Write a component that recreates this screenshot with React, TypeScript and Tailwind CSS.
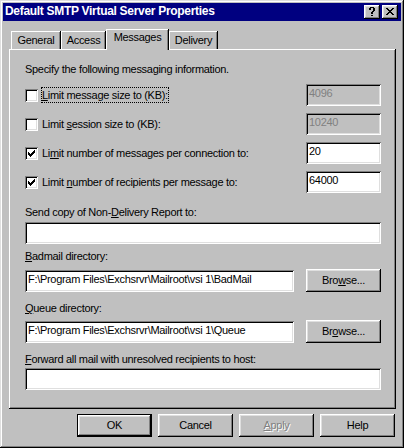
import type { ReactNode } from "react";

const raised =
  "shadow-[inset_-1px_-1px_0_#000,inset_1px_1px_0_#fff,inset_-2px_-2px_0_#808080,inset_2px_2px_0_#dfdfdf]";
const sunken =
  "shadow-[inset_1px_1px_0_#808080,inset_-1px_-1px_0_#fff,inset_2px_2px_0_#000,inset_-2px_-2px_0_#dfdfdf]";

const CHECK = [
  "......X",
  ".....XX",
  "X...XXX",
  "XX.XXX.",
  "XXXXX..",
  ".XXX...",
  "..X....",
];

const CLOSE = [
  "XX....XX",
  ".XX..XX.",
  "..XXXX..",
  "...XX...",
  "..XXXX..",
  ".XX..XX.",
  "XX....XX",
];

const HELP = [
  ".XXXX.",
  "XX..XX",
  "XX..XX",
  "....XX",
  "...XX.",
  "..XX..",
  "..XX..",
  "......",
  "..XX..",
];

function Glyph({ rows }: { rows: string[] }) {
  let d = "";
  rows.forEach((row, y) => {
    let x = 0;
    while (x < row.length) {
      if (row[x] === "X") {
        let end = x;
        while (end < row.length && row[end] === "X") end++;
        d += `M${x} ${y}h${end - x}v1h-${end - x}z`;
        x = end;
      } else x++;
    }
  });
  const w = rows[0].length;
  const h = rows.length;
  return (
    <svg width={w} height={h} viewBox={`0 0 ${w} ${h}`} shapeRendering="crispEdges">
      <path d={d} fill="currentColor" />
    </svg>
  );
}

function Checkbox({ checked }: { checked?: boolean }) {
  return (
    <span className={`flex h-[13px] w-[13px] shrink-0 bg-white pl-[3px] pt-[3px] text-black ${sunken}`}>
      {checked && <Glyph rows={CHECK} />}
    </span>
  );
}

function Edit({
  value = "",
  disabled = false,
  className = "",
}: {
  value?: string;
  disabled?: boolean;
  className?: string;
}) {
  return (
    <div
      className={`h-[22px] whitespace-nowrap px-[3px] pt-[3px] leading-[13px] ${
        disabled ? "bg-[#c0c0c0] text-[#808080]" : "bg-white text-black"
      } ${sunken} ${className}`}
    >
      {value}
    </div>
  );
}

function Button({
  children,
  isDefault = false,
  disabled = false,
}: {
  children: ReactNode;
  isDefault?: boolean;
  disabled?: boolean;
}) {
  const text = disabled ? "text-[#808080] [text-shadow:1px_1px_0_#fff]" : "text-black";
  if (isDefault) {
    return (
      <div className="h-[23px] w-[75px] shrink-0 border border-black">
        <div className={`flex h-full items-center justify-center ${raised} ${text}`}>{children}</div>
      </div>
    );
  }
  return (
    <div className={`flex h-[23px] w-[75px] shrink-0 items-center justify-center ${raised} ${text}`}>
      {children}
    </div>
  );
}

function CaptionButton({ rows }: { rows: string[] }) {
  return (
    <div
      className={`flex h-[14px] w-[16px] items-center justify-center bg-[#c0c0c0] pb-px pr-px text-black ${raised}`}
    >
      <Glyph rows={rows} />
    </div>
  );
}

function Tab({ label, width, selected = false }: { label: string; width: string; selected?: boolean }) {
  return (
    <div
      className={`${width} ${
        selected ? "relative z-10 -mb-px h-[21px] pt-[2px]" : "h-[18px] pt-[3px]"
      } shrink-0 bg-[#c0c0c0] text-center leading-[13px] shadow-[inset_-1px_0_0_#000,inset_1px_1px_0_#fff,inset_-2px_0_0_#808080]`}
    >
      {label}
    </div>
  );
}

function CheckRow({
  label,
  value,
  checked,
  focused,
}: {
  label: ReactNode;
  value: string;
  checked?: boolean;
  focused?: boolean;
}) {
  return (
    <div className="flex h-[22px] items-center">
      <Checkbox checked={checked} />
      <span
        className={`ml-[3px] border leading-[14px] ${focused ? "border-dotted border-black" : "border-transparent"}`}
      >
        {label}
      </span>
      <Edit value={value} disabled={!checked} className="ml-auto w-[75px]" />
    </div>
  );
}

export default function App() {
  return (
    <div
      className={`flex h-[448px] w-[404px] flex-col bg-[#c0c0c0] p-[3px] font-['Liberation_Sans',Arial,sans-serif] text-[11px] tracking-[-0.3px] text-black shadow-[inset_-1px_-1px_0_#000,inset_1px_1px_0_#dfdfdf,inset_-2px_-2px_0_#808080,inset_2px_2px_0_#fff]`}
    >
      {/* caption */}
      <div className="flex h-[18px] shrink-0 items-start bg-[#000080] pl-[2px] pr-[3px]">
        <span className="text-[12px] font-bold leading-[16px] tracking-[-0.3px] text-white">
          Default SMTP Virtual Server Properties
        </span>
        <div className="ml-auto mt-[2px] flex gap-[2px]">
          <CaptionButton rows={HELP} />
          <CaptionButton rows={CLOSE} />
        </div>
      </div>

      {/* tabs */}
      <div className="ml-[6px] mr-[5px] mt-[8px] flex h-[20px] shrink-0 items-end pl-[2px]">
        <Tab label="General" width="w-[50px]" />
        <Tab label="Access" width="w-[45px]" />
        <Tab label="Messages" width="w-[63px]" selected />
        <Tab label="Delivery" width="w-[49px]" />
      </div>

      {/* page */}
      <div className="ml-[6px] mr-[5px] flex h-[360px] shrink-0 flex-col pl-[16px] pr-[15px] pt-[14px] shadow-[inset_-1px_-1px_0_#000,inset_1px_1px_0_#fff,inset_-2px_-2px_0_#808080]">
        <div className="leading-[13px]">Specify the following messaging information.</div>

        <div className="mt-[8px] flex flex-col gap-[7px]">
          <CheckRow
            focused
            value="4096"
            label={
              <>
                <u>L</u>imit message size to (KB):
              </>
            }
          />
          <CheckRow
            value="10240"
            label={
              <>
                Limit <u>s</u>ession size to (KB):
              </>
            }
          />
          <CheckRow
            checked
            value="20"
            label={
              <>
                Li<u>m</u>it number of messages per connection to:
              </>
            }
          />
          <CheckRow
            checked
            value="64000"
            label={
              <>
                Limit <u>n</u>umber of recipients per message to:
              </>
            }
          />
        </div>

        <div className="mt-[13px] leading-[13px]">
          Send copy of Non-<u>D</u>elivery Report to:
        </div>
        <Edit className="mt-[3px]" />

        <div className="mt-[6px] leading-[13px]">
          <u>B</u>admail directory:
        </div>
        <div className="mt-[6px] flex items-center justify-between">
          <Edit className="w-[269px]" value="F:\Program Files\Exchsrvr\Mailroot\vsi 1\BadMail" />
          <Button>
            Bro<u>w</u>se...
          </Button>
        </div>

        <div className="mt-[10px] leading-[13px]">
          <u>Q</u>ueue directory:
        </div>
        <div className="mt-[5px] flex items-center justify-between">
          <Edit className="w-[269px]" value="F:\Program Files\Exchsrvr\Mailroot\vsi 1\Queue" />
          <Button>
            Br<u>o</u>wse...
          </Button>
        </div>

        <div className="mt-[10px] leading-[13px]">
          <u>F</u>orward all mail with unresolved recipients to host:
        </div>
        <Edit className="mt-[2px]" />
      </div>

      {/* buttons */}
      <div className="mt-[5px] flex justify-end gap-[6px] pr-[6px]">
        <Button isDefault>OK</Button>
        <Button>Cancel</Button>
        <Button disabled>
          <u>A</u>pply
        </Button>
        <Button>Help</Button>
      </div>
    </div>
  );
}
